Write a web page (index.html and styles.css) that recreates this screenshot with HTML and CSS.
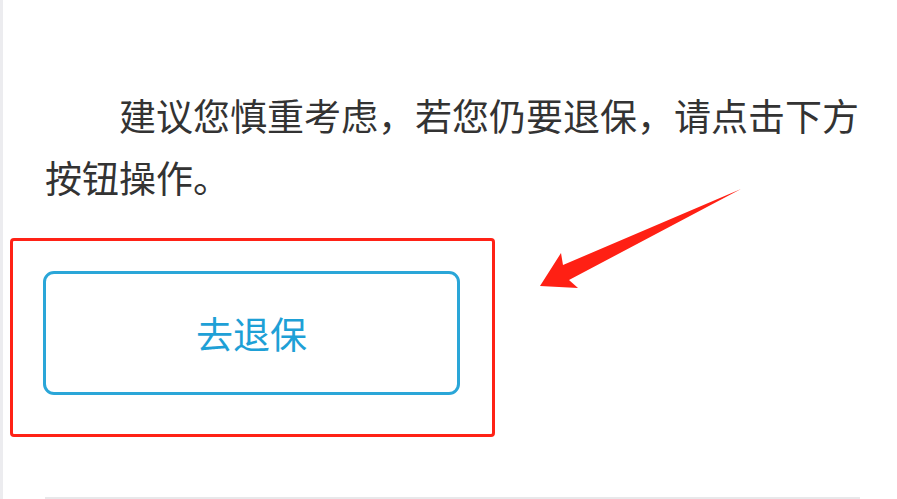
FILE: index.html
```html
<!DOCTYPE html>
<html lang="zh-CN">
<head>
  <meta charset="UTF-8" />
  <meta name="viewport" content="width=device-width, initial-scale=1.0"/>
  <title>退保</title>
  <link rel="stylesheet" href="styles.css">
</head>
<body>

  <main class="page">
    <p class="notice">建议您慎重考虑，若您仍要退保，请点击下方按钮操作。</p>

    <div class="mark-box">
      <button class="btn-cancel" type="button">去退保</button>
    </div>

    <div class="divider"></div>
  </main>

  <!-- annotation arrow pointing at the button -->
  <svg class="mark-arrow" width="220" height="120" viewBox="0 0 220 120">
    <polygon points="10,106 31,73 33,85 211,9 39,100 48,108" fill="#ff2014"/>
  </svg>

</body>
</html>
```

FILE: styles.css
```css
body {margin: 0; font-family: "Noto Sans CJK SC", "Noto Sans", sans-serif; background-color: #fff; color: #333; overflow: hidden;}
.page {border-left: 3px solid #ececef; height: 499px; box-sizing: border-box; padding: 84px 37px 0 42px;}
.notice {margin: 0; font-size: 37px; line-height: 62px; text-indent: 2em; color: #333;}
.mark-box {margin: 30px 0 0 -35px; width: 485px; box-sizing: border-box; border: 3px solid #ff2216; border-radius: 4px; padding: 30px 32px 39px 30px;}
.btn-cancel {display: block; width: 100%; height: 124px; background-color: #fff; border: 3px solid #2aa6d8; border-radius: 11px; color: #1ea0d6; font-family: inherit; font-size: 37px; cursor: pointer;}
.divider {margin-top: 60px; height: 2px; background-color: #e8e8ea;}
.mark-arrow {position: absolute; left: 530px; top: 180px;}
```
